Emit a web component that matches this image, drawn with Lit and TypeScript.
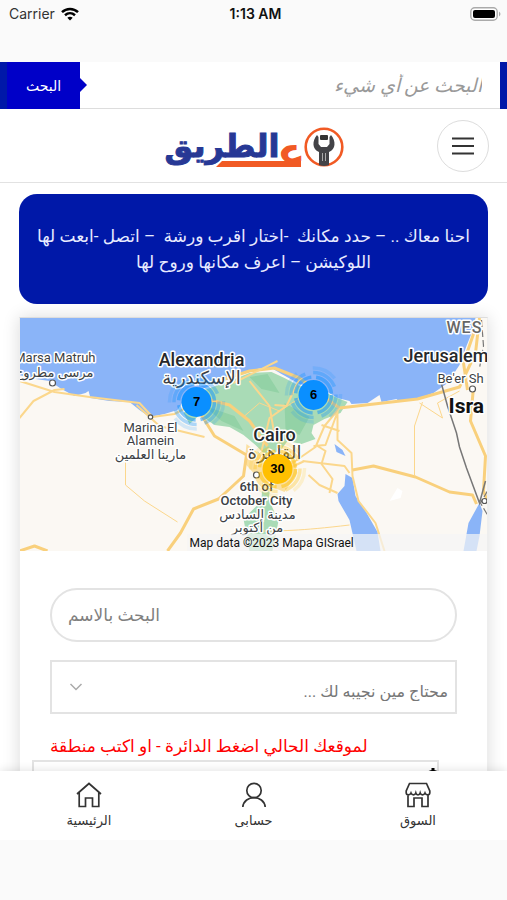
import { LitElement, html, svg, css } from "lit";
import { customElement } from "lit/decorators.js";

const wrench = svg`
  <circle cx="323" cy="146" r="18.3" fill="#fff" stroke="#f15a24" stroke-width="2.6"/>
  <path d="M316 134 C311 140 311 148 318 151 V164 Q323 166 328 164 V151 C335 148 335 140 330 134 L328.500 136 V143 L326 146 H320 L317.500 143 V136 Z" fill="#434347"/>
  <rect x="319" y="134" width="8" height="5" rx="1" fill="#333"/>
  <path d="M321.500 152 V160 M324.500 152 V160" stroke="#aaa" stroke-width="1" fill="none"/>`;

@customElement("status-bar")
class StatusBar extends LitElement {
  static styles = css`
    :host { display: grid; grid-template-columns: 1fr auto 1fr; align-items: start; flex: none; height: 62px; padding: 7px 5px 0 9px; background: #fafafa; font: 14px/14px Inter, sans-serif; color: #111; }
    .side { display: flex; align-items: center; gap: 6px; color: #333; }
    .end { justify-content: flex-end; }
    .time { font-weight: 600; }
  `;
  render() {
    return html`
      <div class="side"><span>Carrier</span>
        <svg width="18" height="14" viewBox="0 0 18 14" fill="none" stroke="#000" stroke-width="2.500">
          <path d="M1 5.200 C5.500 .9 12.500 .9 17 5.200"/><path d="M4 8.300 C7 5.600 11 5.600 14 8.300"/><path d="M9 13.500 L6.300 10.800 Q9 8.800 11.700 10.800 Z" fill="#000" stroke="none"/>
        </svg>
      </div>
      <div class="time">1:13 AM</div>
      <div class="side end">
        <svg width="32" height="14" viewBox="0 0 32 14"><rect x=".8" y=".8" width="26.400" height="12.400" rx="4" fill="#fff" stroke="#aaa" stroke-width="1.400"/><rect x="3" y="3" width="22" height="8" rx="2" fill="#000"/><path d="M29 4.500 Q32 7 29 9.500 Z" fill="#aaa"/></svg>
      </div>`;
  }
}

@customElement("region-map")
class RegionMap extends LitElement {
  static styles = css`
    :host { display: block; }
    .map { display: block; width: 100%; height: 233px; }
    .road { fill: none; stroke: #fbd78c; stroke-width: 2; stroke-linejoin: round; }
    .major { stroke-width: 3; stroke: #f9d07c; }
    .thin { stroke-width: 1; }
    .label { font-family: Roboto, "DejaVu Sans", sans-serif; font-size: 13px; fill: #3c3f44; stroke: #fff; stroke-width: 3; paint-order: stroke; text-anchor: middle; stroke-linejoin: round; }
    .city { font-size: 18px; font-weight: 500; fill: #26282c; }
    .land { font-size: 21px; font-weight: 700; fill: #111; }
    .ar { font-size: 13px; }
    .arcity { font-size: 18px; }
    .mid { font-weight: 500; }
    .area { font-size: 16px; font-weight: 500; letter-spacing: 1px; fill: #666; }
    .count { font: 700 13px "Liberation Sans", sans-serif; text-anchor: middle; fill: #000; }
    .credit { font: 12px Roboto, sans-serif; fill: #111; }
    .start { text-anchor: start; }
    .end { text-anchor: end; }
  `;
  cluster(x: number, y: number, n: number, color: string) {
    return svg`
      <g fill="none" stroke=${color} stroke-width="3.500">
        <circle cx=${x} cy=${y} r="18" opacity=".5" stroke-dasharray="24 5"/>
        <circle cx=${x} cy=${y} r="22.500" opacity=".32" stroke-dasharray="27 8"/>
        <circle cx=${x} cy=${y} r="27" opacity=".16" stroke-dasharray="25 17"/>
      </g>
      <circle cx=${x} cy=${y} r="15" fill=${color}/>
      <text class="count" x=${x} y=${y + 4}>${n}</text>`;
  }
  render() {
    return html`
    <svg class="map" viewBox="20 317 468 233" preserveAspectRatio="xMidYMid slice" role="img" aria-label="Map">
      <rect x="20" y="317" width="468" height="233" fill="#fbf8f3"/>
      <path fill="#8ab4f8" d="M20 317V374L36 378 50 380 56 384 62 388 75 395 86 392 89 390 91 397 110 400 130 401 140 409 150 416 165 413 178 409 187 395 205 387 230 378 245 371 262 367 272 367 282 373 300 383 325 389 338 397 350 400 352 403 368 402 380 394 382 401 397 398 400 401 420 397 434 392 448 382 460 364 467 345 473 330 476 317Z"/>
      <path fill="#a9dbb6" d="M205 389L230 380 250 372 272 371 285 377 300 385 325 391 338 397 348 401 341 412 325 418 314 424 312 432 316 438 302 443 288 440 282 448 268 456 256 444 244 434 230 426 215 424 200 414 190 423 184 412Z"/>
      <path fill="#93d2a6" d="M250 376L268 373 280 392 262 388ZM205 405L235 415 244 430 222 420ZM285 402L310 416 300 434 286 428Z"/>
      <path fill="#a9dbb6" d="M258 450L274 470 269 498 279 520 273 550H250L244 518 262 500 263 478Z"/>
      <path fill="#fbe0a0" d="M247 443L263 455 292 450 298 472 285 491 263 482 245 462Z"/>
      <path fill="#8ab4f8" d="M335 443L343 449 346 455 337 451ZM346 473L353 477 356 495 366 510 378 531 381 550H357L350 519 339 500 338 493 345 485ZM480 502L483 510 480 535 477 550H464L469 522Z"/>
      <path fill="#fff" d="M398 487L403 490 401 497 390 500Z"/>
      <path class="road" d="M20 380L55 391 90 396 140 402 153 416 175 413 190 405M20 417L34 400 55 389 65 388M137 404L160 425 205 436"/>
      <path class="road thin" d="M126 457V484L145 500 178 521M258 530C280 530 300 530 350 524M423 401L415 425V474M420 402L443 417 438 402 460 390M245 415L260 402 280 410 302 396"/>
      <path class="road major" d="M195 403L215 435 247 454 244 475 230 488 219 498 194 508 181 532 168 550M225 378L250 370 275 367 300 377 330 400 340 407 418 398 460 386 476 352 480 317M203 397L230 404 250 420 268 445"/>
      <path class="road" d="M234 382L278 360M250 380L270 405 276 440M300 378L287 405 270 417 262 450M287 405L275 404M340 407L325 425 316 446 290 464 273 475M322 424L340 430M318 445L326 450 322 463 333 478 330 492M303 460L345 465 350 472M338 408V439L352 452 353 475 359 500 376 522 385 550M309 474L320 484 338 492M273 475L305 460M314 445L326 444 338 411"/>
      <path class="road major" d="M353 469L374 465 416 476 450 491 473 494 477 503M20 550L35 545 48 550M474 386L471 420 486 455 484 490 488 500M475 330L464 362 468 389"/>
      <path d="M442 383L448 405 457 432 460 446 467 467 480 502 486 480" fill="none" stroke="#777" stroke-width="1.500"/>
      <path d="M482 319L484 345 480 367M488 490L481 502 488 514" fill="none" stroke="#777" stroke-width="1.200" stroke-dasharray="7 3"/>
      <g fill="#fff" stroke="#555" stroke-width="1.200"><circle cx="53" cy="382" r="3"/><circle cx="151" cy="416" r="2.200"/><circle cx="257" cy="474" r="3"/><circle cx="473" cy="388" r="3"/><circle cx="485" cy="500" r="2.500"/></g>
      <text class="label end" x="96" y="361">Marsa Matruh</text>
      <text class="label ar end" direction="ltr" x="94" y="376">مرسى مطروح</text>
      <text class="label city" x="202" y="365">Alexandria</text>
      <text class="label arcity" x="202" y="383">الإسكندرية</text>
      <text class="label" x="151" y="431">Marina El</text>
      <text class="label" x="151" y="444">Alamein</text>
      <text class="label ar" x="151" y="458">مارينا العلمين</text>
      <text class="label city" x="275" y="440">Cairo</text>
      <text class="label arcity" x="275" y="458">القاهرة</text>
      <text class="label mid" x="257" y="490">6th of</text>
      <text class="label mid" x="257" y="504">October City</text>
      <text class="label ar" x="258" y="518">مدينة السادس</text>
      <text class="label ar" x="258" y="531">من أكتوبر</text>
      <text class="label area start" x="447" y="332">WES</text>
      <text class="label city start" x="404" y="361">Jerusalem</text>
      <text class="label start" x="438" y="382">Be'er Sh</text>
      <text class="label land start" x="449" y="412">Isra</text>
      ${this.cluster(197, 401, 7, "#0a8fff")}
      ${this.cluster(314, 394, 6, "#0a8fff")}
      ${this.cluster(278, 468, 30, "#ffbf00")}
      <rect x="188" y="533" width="300" height="17" fill="#f5f5f5" opacity=".7"/>
      <text class="credit" x="190" y="546">Map data ©2023 Mapa GISrael</text>
    </svg>`;
  }
}

@customElement("app-root")
class AppRoot extends LitElement {
  static styles = css`
    :host { display: flex; flex-direction: column; height: 100vh; background: #fff; font-family: Roboto, "DejaVu Sans", sans-serif; }
    * { box-sizing: border-box; }
    button, input, select { font-family: inherit; margin: 0; border-radius: 0; outline: none; }
    .search { display: flex; direction: ltr; height: 47px; flex: none; padding: 0 7px; background: #0018a8; }
    .go { position: relative; width: 73px; border: 0; background: #0000c8; color: #fff; font-size: 14px; }
    .go::after { content: ""; position: absolute; left: 100%; top: 16px; border: 7px solid transparent; border-left-color: #0000c8; border-right: 0; }
    .query { flex: 1; min-width: 0; border: 0; border-bottom: 1px solid #ddd; padding: 0 18px; font-size: 19px; font-style: italic; background: #fff; }
    ::placeholder { color: #808080; opacity: 1; }
    .query::placeholder { color: #999; }
    .top { display: grid; grid-template-columns: 1fr auto 1fr; align-items: center; height: 74px; flex: none; padding: 0 18px; border-bottom: 1px solid #e2e2e2; }
    .logo { grid-column: 2; display: block; }
    .word { font: 700 32px "DejaVu Sans", sans-serif; fill: #273895; stroke: #273895; stroke-width: 1; }
    .ain { font: 700 42px "DejaVu Sans", sans-serif; fill: #f15a24; }
    .menu { justify-self: end; display: grid; place-items: center; width: 52px; height: 52px; padding: 0; border: 1px solid #ddd; border-radius: 50%; background: #fff; }
    .main { flex: 1; min-height: 0; overflow: hidden; padding: 11px 19px 0; }
    .banner { margin: 0 0 13px; padding: 29px 16px; height: 110px; border-radius: 18px; background: #0018a8; color: #e8ebff; font-size: 17px; line-height: 26px; text-align: center; white-space: pre; direction: rtl; }
    .card { height: 700px; background: #fff; box-shadow: 0 0 16px #00000024; border: 1px solid #eee; border-top-color: #ddd; }
    .form { padding: 37px 30px 0; display: flex; flex-direction: column; }
    .name { height: 54px; border: 2px solid #e3e3e3; border-radius: 27px; padding: 0 16px; font-size: 17px; background: #fff; }
    .pick { position: relative; margin-top: 18px; display: grid; }
    .kind { appearance: none; direction: rtl; height: 54px; border: 2px solid #e3e3e3; padding: 8px 7px 0; font-size: 16px; color: #777; background: #fff; }
    .chev { position: absolute; left: 19px; top: 20px; pointer-events: none; }
    .hint { margin-top: 19px; line-height: 26px; font-size: 17px; color: #f00; direction: rtl; text-align: right; align-self: flex-start; white-space: nowrap; }
    .place { position: relative; display: flex; margin: 1px 18px 0 -18px; }
    .area { flex: 1; min-width: 0; height: 54px; border: 2px solid #e3e3e3; background: #fff; padding: 0 32px 0 16px; }
    .locate { position: absolute; right: -6px; top: 8px; padding: 0; border: 0; background: none; line-height: 0; }
    .nav { flex: none; position: relative; display: grid; grid-template-columns: repeat(3, 110px); justify-content: space-between; padding: 0 34px; height: 69px; background: #fff; box-shadow: 0 -2px 8px #00000018; }
    .tab { display: flex; flex-direction: column; align-items: center; padding-top: 11px; gap: 3px; color: #333; font-size: 13px; line-height: 20px; text-decoration: none; }
    .safe { flex: none; position: relative; height: 60px; background: #fafafa; }
  `;
  render() {
    return html`
      <status-bar></status-bar>
      <form class="search" role="search" @submit=${(e: Event) => e.preventDefault()}>
        <button class="go">البحث</button>
        <input class="query" dir="rtl" aria-label="البحث" placeholder="البحث عن أي شيء">
      </form>
      <header class="top">
        <svg class="logo" width="180" height="52" viewBox="163 119 180 52" role="img" aria-label="ع الطريق">
          <text class="word" x="221" y="156" text-anchor="middle">الطريق</text>
          <path d="M221 160H300V166H215Z" fill="#f15a24"/>
          <text class="ain" x="290" y="166" text-anchor="middle">ع&zwj;</text>
          ${wrench}
        </svg>
        <button class="menu" aria-label="القائمة"><svg width="22" height="18" viewBox="0 0 22 18"><path d="M0 1.500H22M0 9H22M0 16.500H22" stroke="#333" stroke-width="2"/></svg></button>
      </header>
      <main class="main">
        <p class="banner">احنا معاك .. – حدد مكانك  -اختار اقرب ورشة  – اتصل -ابعت لها
اللوكيشن – اعرف مكانها وروح لها</p>
        <section class="card">
          <region-map></region-map>
          <form class="form">
            <input class="name" aria-label="البحث بالاسم" placeholder="البحث بالاسم">
            <div class="pick">
              <select class="kind" aria-label="محتاج مين نجيبه لك"><option>محتاج مين نجيبه لك ...</option></select>
              <svg class="chev" width="14" height="14" viewBox="0 0 14 14"><path d="M1.500 4L7 9.500 12.500 4" fill="none" stroke="#aaa" stroke-width="1.500"/></svg>
            </div>
            <label class="hint" for="area">لموقعك الحالي اضغط الدائرة - او اكتب منطقة</label>
            <div class="place">
              <input class="area" id="area">
              <button class="locate" type="button" aria-label="موقعي"><svg width="24" height="24" viewBox="0 0 24 24"><circle cx="12" cy="12" r="8.500" fill="none" stroke="#000" stroke-width="3"/><path d="M10.500 0H13.500V4H10.500ZM10.500 20H13.500V24H10.500ZM0 10.500H4V13.500H0ZM20 10.500H24V13.500H20Z"/><circle cx="12" cy="12" r="4"/></svg></button>
            </div>
          </form>
        </section>
      </main>
      <nav class="nav">
        <a class="tab" href="#home"><svg width="26" height="26" viewBox="0 0 26 26" fill="none" stroke="#333" stroke-width="1.700"><path d="M1 12L13 1.500 25 12M3.200 10.500V24.500H9.500V16H16.500V24.500H22.800V10.500"/></svg>الرئيسية</a>
        <a class="tab" href="#account"><svg width="26" height="26" viewBox="0 0 26 26" fill="none" stroke="#333" stroke-width="1.700"><circle cx="13" cy="8.500" r="7.200"/><path d="M1.800 25C3 12.500 23 12.500 24.200 25"/></svg>حسابى</a>
        <a class="tab" href="#market"><svg width="26" height="26" viewBox="0 0 26 26" fill="none" stroke="#333" stroke-width="1.700"><path d="M4.500 1.500H21.500L24.800 9V11C24.500 13.500 21 13.500 20 11 19 13.500 16 13.500 15.200 11 14.500 13.500 11.500 13.500 10.800 11 10 13.500 7 13.500 6 11 5 13.500 1.500 13.500 1.200 11V9ZM3 13V24.500H9V16H17V24.500H23V13"/></svg>السوق</a>
      </nav>
      <div class="safe"></div>`;
  }
}
